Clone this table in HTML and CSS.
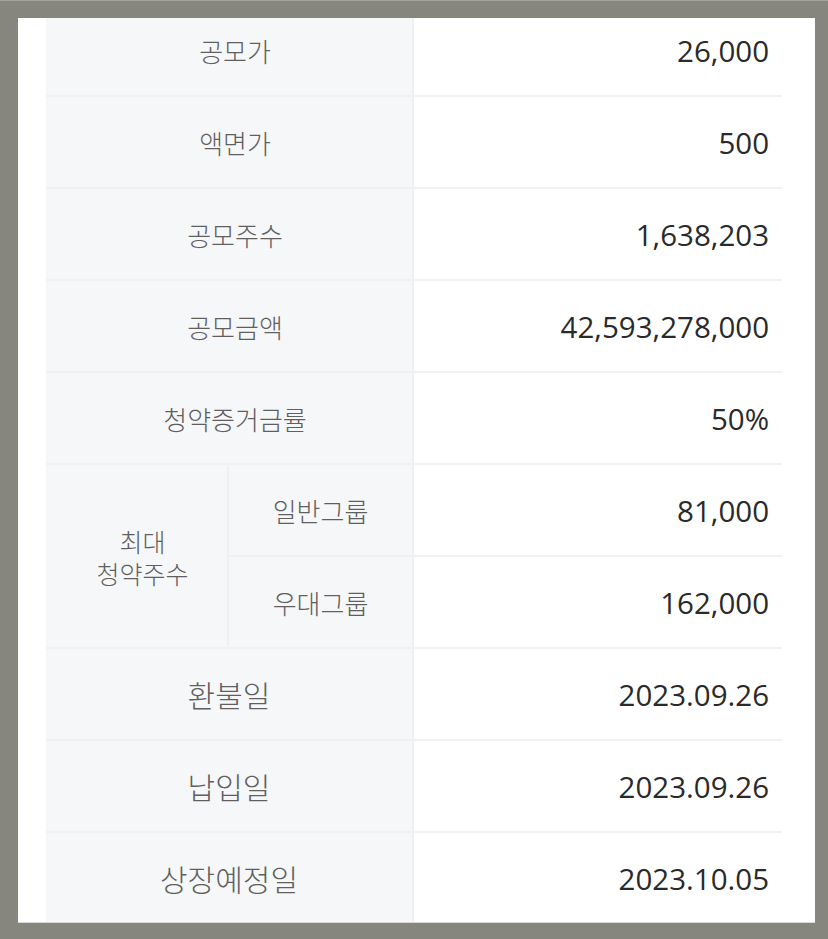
FILE: index.html
```html
<!DOCTYPE html>
<html lang="ko">
<head>
<meta charset="utf-8">
<title>공모 정보</title>
<link rel="stylesheet" href="styles.css">
</head>
<body>
<div class="frame">
  <div class="screen">
    <table class="info">
      <colgroup>
        <col class="c-a"><col class="c-b"><col class="c-v">
      </colgroup>
      <tbody>
        <tr><th colspan="2" class="shift">공모가</th><td>26,000</td></tr>
        <tr><th colspan="2" class="shift">액면가</th><td>500</td></tr>
        <tr><th colspan="2" class="shift">공모주수</th><td>1,638,203</td></tr>
        <tr><th colspan="2" class="shift">공모금액</th><td>42,593,278,000</td></tr>
        <tr><th colspan="2" class="shift">청약증거금률</th><td>50%</td></tr>
        <tr><th rowspan="2" class="group shift">최대<br>청약주수</th><th class="sub">일반그룹</th><td>81,000</td></tr>
        <tr><th class="sub">우대그룹</th><td>162,000</td></tr>
        <tr><th colspan="2" class="big">환불일</th><td>2023.09.26</td></tr>
        <tr><th colspan="2" class="big">납입일</th><td>2023.09.26</td></tr>
        <tr class="last"><th colspan="2" class="big">상장예정일</th><td>2023.10.05</td></tr>
      </tbody>
    </table>
  </div>
</div>
</body>
</html>
```
FILE: styles.css
```css
html, body {
  margin: 0;
  padding: 0;
}
body {
  width: 828px;
  height: 939px;
  overflow: hidden;
  background: #86867e;
}
.frame {
  box-sizing: border-box;
  width: 828px;
  height: 939px;
  padding: 17px 13px 17px 18px;
  border-top: 1px solid #a3a39c;
}
.screen {
  box-sizing: border-box;
  height: 905px;
  background: #ffffff;
  overflow: hidden;
  padding: 0 33px 0 28px;
  border-bottom: 1px solid #d9d9d6;
}
.info {
  width: 736px;
  margin-top: -13px;
  border-collapse: collapse;
  table-layout: fixed;
}
.c-a { width: 182px; }
.c-b { width: 185px; }
.c-v { width: 369px; }
.info th,
.info td {
  height: 90px;
  padding: 0;
  border-bottom: 2px solid #f0f1f3;
  vertical-align: middle;
}
.info th {
  background: #f6f7f9;
  border-right: 2px solid #eef0f3;
  font-family: "Noto Sans CJK KR", "Noto Sans", sans-serif;
  font-weight: 300;
  font-size: 26px;
  color: #5f5f5f;
  text-align: center;
}
.info th.shift {
  padding-left: 12px;
}
.info th.group {
  font-size: 25px;
  line-height: 32px;
  padding-top: 2px;
}
.info th.big {
  font-size: 30px;
}
.info td {
  font-family: "Open Sans", "Noto Sans", sans-serif;
  font-size: 29.5px;
  color: #2a2a2a;
  text-align: right;
  padding-right: 13px;
}
.info tr.last th,
.info tr.last td {
  border-bottom: 0;
}
```
